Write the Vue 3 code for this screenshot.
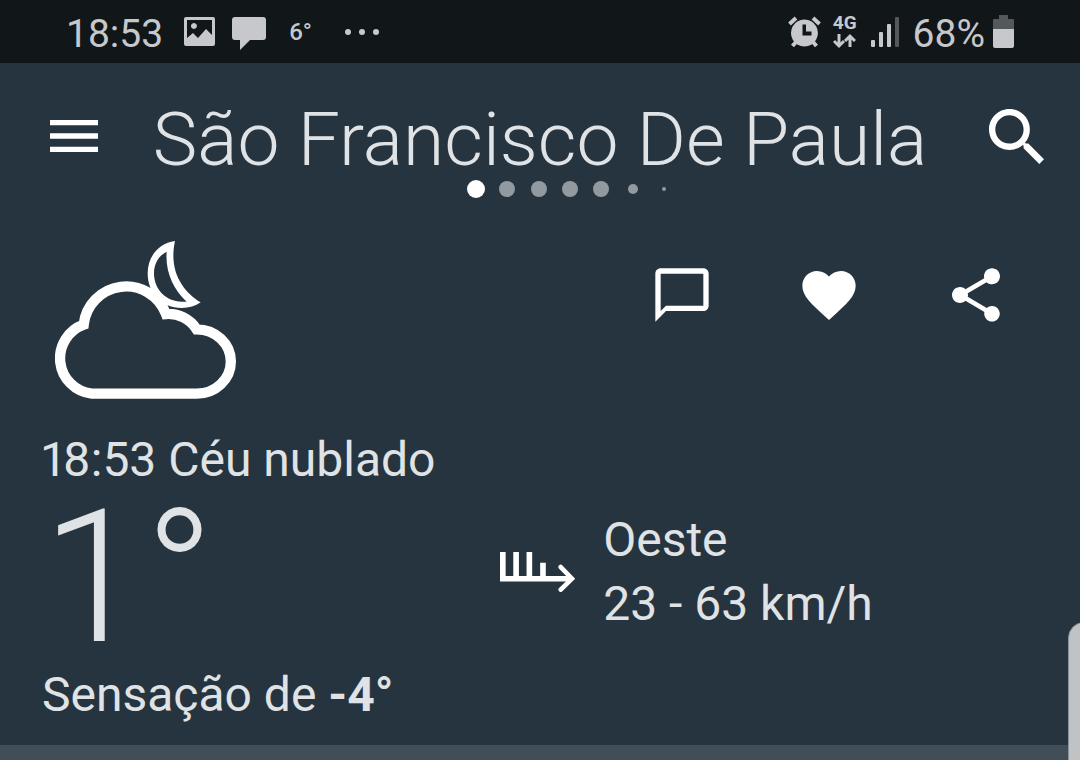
<template>
  <div class="weather-app">
    <div class="status-bar">
      <div class="status-left">
        <span class="clock">18:53</span>
        <svg class="icon-picture" viewBox="0 0 31 29" width="31" height="29" aria-hidden="true">
          <path
            fill-rule="evenodd"
            d="M2 0H29Q31 0 31 2V27Q31 29 29 29H2Q0 29 0 27V2Q0 0 2 0ZM3 3V21L9 16L14 21L22 12L28 18V3ZM10 6A3 3 0 1 1 9.900 6Z"
          />
        </svg>
        <svg class="icon-message" viewBox="0 0 34 33" width="34" height="33" aria-hidden="true">
          <path d="M3 0H31Q34 0 34 3V20Q34 23 31 23H18L8 33V23H3Q0 23 0 20V3Q0 0 3 0Z" />
        </svg>
        <span class="mini-temp">6°</span>
        <svg class="icon-more" viewBox="0 0 36 8" width="36" height="8" aria-hidden="true">
          <circle cx="4" cy="4" r="3" />
          <circle cx="18" cy="4" r="3" />
          <circle cx="32" cy="4" r="3" />
        </svg>
      </div>
      <div class="status-right">
        <svg viewBox="0 0 33 32" width="33" height="32" aria-hidden="true">
          <path
            fill-rule="evenodd"
            d="M16.500 3.500A13.500 13.500 0 1 1 16.400 3.500ZM14.500 8.500V19.500H23.500V15.500H18V8.500Z"
          />
          <path
            class="line"
            d="M1.500 8L8 2M31.500 8L25 2M8 26L4.500 30M25 26L28.500 30"
            stroke-width="4"
          />
        </svg>
        <span class="network">
          <span class="network-type">4G</span>
          <svg viewBox="0 0 23 16" width="23" height="16" aria-hidden="true">
            <path class="line" d="M6 1V13M1 8L6 13L11 8M17 14V3M12 8L17 3L22 8" stroke-width="3" />
          </svg>
        </span>
        <svg class="icon-signal" viewBox="0 0 29 30" width="29" height="30" aria-hidden="true">
          <rect x="0" y="23" width="4" height="7" rx="1" />
          <rect x="8" y="15" width="4" height="15" rx="1" />
          <rect x="16" y="7" width="4" height="23" rx="1" />
          <rect class="dim" x="24" y="0" width="4" height="30" rx="1" />
        </svg>
        <span class="battery-level">68%</span>
        <svg class="icon-battery" viewBox="0 0 21 33" width="21" height="33" aria-hidden="true">
          <path class="dim" d="M6 0H15V4H20Q21 4 21 5V14H0V5Q0 4 1 4H6Z" />
          <path d="M0 14H21V31Q21 33 19 33H2Q0 33 0 31Z" />
        </svg>
      </div>
    </div>

    <header class="header">
      <button class="icon-btn" type="button" aria-label="Menu">
        <svg viewBox="3 6 18 12" width="48" height="32">
          <path d="M3 18h18v-2H3v2zm0-5h18v-2H3v2zm0-7v2h18V6H3z" />
        </svg>
      </button>
      <div class="place">
        <h1>São Francisco De Paula</h1>
        <div class="pager">
          <span v-for="(size, index) in dots" :key="index" class="slot">
            <span class="dot" :class="size"></span>
          </span>
        </div>
      </div>
      <button class="icon-btn" type="button" aria-label="Buscar">
        <svg viewBox="3 3 17.490 17.490" width="55" height="55">
          <path
            d="M15.500 14h-.79l-.28-.27C15.410 12.590 16 11.110 16 9.500 16 5.910 13.090 3 9.500 3S3 5.910 3 9.500 5.910 16 9.500 16c1.610 0 3.090-.59 4.230-1.570l.27.28v.79l5 4.990L20.490 19l-4.990-5zm-6 0C7.010 14 5 11.990 5 9.500S7.010 5 9.500 5 14 7.010 14 9.500 11.990 14 9.500 14z"
          />
        </svg>
      </button>
    </header>

    <main class="current">
      <div class="top-row">
        <svg class="sky" viewBox="45 30 546 480" width="182" height="160" role="img" aria-label="Céu nublado">
          <path
            class="cloud"
            d="M155 491H470A102 96 0 0 0 470 298A101 101 0 0 0 378 252A128 128 0 0 0 131 284A107 107 0 0 0 155 491Z"
          />
          <path
            fill-rule="evenodd"
            d="M405 33C355 40 323 80 323 130C323 190 365 234 425 234C447 234 467 228 482 217C430 185 385 125 405 33ZM380 65C355 78 342 102 342 130C342 178 378 215 425 215H440C400 178 375 125 380 65Z"
          />
        </svg>
        <div class="actions">
          <button v-for="action in actions" :key="action.label" class="icon-btn" type="button" :aria-label="action.label">
            <svg viewBox="0 0 24 24" width="64" height="64">
              <path :d="action.path" />
            </svg>
          </button>
        </div>
      </div>

      <p class="text">18:53 Céu nublado</p>

      <div class="reading">
        <div class="temperature">1°</div>
        <div class="wind">
          <svg viewBox="63 158 226 120" width="75" height="40" aria-hidden="true">
            <path d="M63 158H80V230H103V158H120V230H143V158H160V230H184V190H201V230H275V247H63Z" />
            <path class="arrow" d="M246 203L280 238L246 271" />
          </svg>
          <div class="wind-text">
            <p>Oeste</p>
            <p>23 - 63 km/h</p>
          </div>
        </div>
      </div>

      <p class="text">Sensação de <strong>-4°</strong></p>
    </main>

    <div class="next-section"></div>
    <div class="scroll-thumb"></div>
  </div>
</template>

<script setup>
const dots = ['active', 'normal', 'normal', 'normal', 'normal', 'small', 'tiny']

const actions = [
  {
    label: 'Comentar',
    path: 'M20 2H4c-1.1 0-2 .9-2 2v18l4-4h14c1.1 0 2-.9 2-2V4c0-1.1-.9-2-2-2zm0 14H6l-2 2V4h16v12z',
  },
  {
    label: 'Favorito',
    path: 'M12 21.35l-1.45-1.32C5.4 15.36 2 12.28 2 8.5 2 5.42 4.42 3 7.5 3c1.74 0 3.41.81 4.500 2.090C13.090 3.810 14.760 3 16.500 3 19.580 3 22 5.420 22 8.500c0 3.780-3.400 6.860-8.550 11.540L12 21.350z',
  },
  {
    label: 'Compartilhar',
    path: 'M18 16.080c-.76 0-1.440.3-1.960.77L8.910 12.700c.05-.23.09-.46.09-.7s-.04-.47-.09-.7l7.050-4.110c.54.5 1.250.81 2.040.81 1.660 0 3-1.340 3-3s-1.340-3-3-3-3 1.340-3 3c0 .24.040.47.090.7L8.040 9.810C7.500 9.310 6.790 9 6 9c-1.660 0-3 1.340-3 3s1.340 3 3 3c.79 0 1.500-.31 2.040-.81l7.120 4.160c-.05.21-.08.43-.08.65 0 1.610 1.310 2.920 2.920 2.920 1.610 0 2.920-1.310 2.920-2.920s-1.310-2.920-2.920-2.920z',
  },
]
</script>

<style>
body {
  margin: 0;
  background: #26343f;
}
</style>

<style scoped>
.weather-app {
  position: relative;
  display: flex;
  flex-direction: column;
  min-height: 100vh;
  overflow: hidden;
  background: #26343f;
  color: #e0e3e5;
  font-family: Roboto, sans-serif;
}

svg {
  display: block;
  flex: none;
  fill: currentColor;
}

h1,
p {
  margin: 0;
  font-weight: 400;
}

.status-bar {
  display: flex;
  align-items: center;
  justify-content: space-between;
  height: 63px;
  padding: 0 66px;
  background: #111619;
  color: #c6c8cb;
}

.status-left,
.status-right {
  display: flex;
  align-items: center;
}

.clock,
.battery-level {
  font-size: 39px;
  line-height: 46px;
  padding-top: 4px;
}

.icon-picture {
  margin-left: 21px;
}

.icon-message {
  margin-top: 3px;
  margin-left: 17px;
}

.mini-temp {
  margin-left: 23px;
  font-size: 24px;
  font-weight: 500;
}

.icon-more {
  margin-left: 32px;
}

.network {
  display: flex;
  flex-direction: column;
  align-items: center;
  gap: 2px;
  margin: 0 14px 0 12px;
}

.network-type {
  font-size: 19px;
  line-height: 16px;
  font-weight: 700;
}

.battery-level {
  margin: 0 8px 0 13px;
}

.line {
  fill: none;
  stroke: currentColor;
}

.dim {
  fill: #54585b;
}

.header {
  display: grid;
  grid-template-columns: 62px 1fr 62px;
  padding: 35px 36px 0;
}

.icon-btn {
  display: flex;
  align-items: center;
  justify-content: flex-end;
  padding: 0;
  border: none;
  background: none;
  color: #fff;
  cursor: pointer;
}

.header .icon-btn {
  height: 76px;
}

.place {
  display: flex;
  flex-direction: column;
  align-items: center;
}

h1 {
  font-size: 75px;
  font-weight: 300;
  line-height: 82px;
  white-space: nowrap;
}

.pager {
  display: grid;
  grid-template-columns: repeat(7, 1fr);
  width: 220px;
  height: 16px;
  margin-left: 60px;
}

.slot {
  display: flex;
  align-items: center;
  justify-content: center;
}

.dot {
  flex: none;
  width: 16px;
  height: 16px;
  border-radius: 50%;
  background: #92999f;
}

.dot.active {
  width: 18px;
  height: 18px;
  background: #fff;
}

.dot.small {
  width: 10px;
  height: 10px;
}

.dot.tiny {
  width: 4px;
  height: 4px;
}

.current {
  padding: 44px 42px 20px;
}

.top-row {
  display: flex;
  justify-content: space-between;
  align-items: flex-start;
  padding: 0 30px 30px 13px;
}

.sky {
  color: #fff;
}

.cloud {
  fill: none;
  stroke: currentColor;
  stroke-width: 31;
  stroke-linejoin: miter;
}

.actions {
  display: flex;
  gap: 83px;
  padding-top: 23px;
}

.text {
  font-size: 48px;
  line-height: 60px;
  font-variant-numeric: proportional-nums;
}

.reading {
  display: grid;
  grid-template-columns: 46% 54%;
}

.temperature {
  font-size: 185px;
  font-weight: 300;
  line-height: 175px;
}

.wind {
  display: flex;
  align-items: center;
  align-self: start;
  gap: 28px;
  padding-top: 18px;
}

.wind svg {
  color: #fff;
}

.arrow {
  fill: none;
  stroke: currentColor;
  stroke-width: 14;
  stroke-linecap: round;
}

.wind-text {
  font-size: 48px;
  line-height: 64px;
}

.next-section {
  flex: 1;
  min-height: 15px;
  background: #414d57;
}

.scroll-thumb {
  position: absolute;
  right: -20px;
  bottom: -20px;
  width: 30px;
  height: 156px;
  border: 1px solid #8b9297;
  border-radius: 16px;
  background: #bfc3c6;
}
</style>
